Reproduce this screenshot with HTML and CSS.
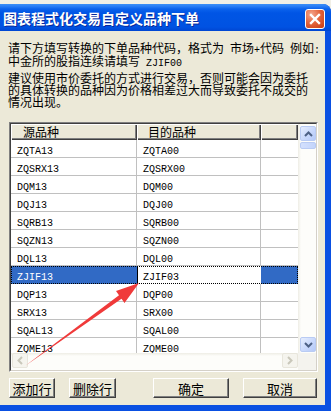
FILE: index.html
```html
<!DOCTYPE html>
<html lang="zh-CN">
<head>
  <meta charset="UTF-8" />
  <title>图表程式化交易自定义品种下单</title>
  <link rel="stylesheet" href="styles.css">
</head>
<body>
  <div class="desk"></div>

  <div class="window">
    <div class="titlebar">
      <span class="title">图表程式化交易自定义品种下单</span>
      <span class="close">
        <svg width="18" height="18" viewBox="0 0 18 18"><path d="M5 5 L13 13 M13 5 L5 13" stroke="#fff" stroke-width="2.4" stroke-linecap="square"/></svg>
      </span>
    </div>

    <div class="client">
      <p class="msg">请下方填写转换的下单品种代码，格式为<span class="hw"> </span>市场<span class="hw">+</span>代码<span class="hw"> </span>例如<span class="hw">:</span><br>中金所的股指连续请填写<span class="hw"> ZJIF00</span></p>
      <p class="msg second">建议使用市价委托的方式进行交易，否则可能会因为委托<br>的具体转换的品种因为价格相差过大而导致委托不成交的<br>情况出现。</p>

      <div class="grid">
        <div class="grid-in">
          <div class="list">
            <div class="row head"><div class="cell">源品种</div><div class="cell">目的品种</div><div class="cell"></div></div>
            <div class="row"><div class="cell">ZQTA13</div><div class="cell">ZQTA00</div><div class="cell"></div></div>
            <div class="row"><div class="cell">ZQSRX13</div><div class="cell">ZQSRX00</div><div class="cell"></div></div>
            <div class="row"><div class="cell">DQM13</div><div class="cell">DQM00</div><div class="cell"></div></div>
            <div class="row"><div class="cell">DQJ13</div><div class="cell">DQJ00</div><div class="cell"></div></div>
            <div class="row"><div class="cell">SQRB13</div><div class="cell">SQRB00</div><div class="cell"></div></div>
            <div class="row"><div class="cell">SQZN13</div><div class="cell">SQZN00</div><div class="cell"></div></div>
            <div class="row"><div class="cell">DQL13</div><div class="cell">DQL00</div><div class="cell"></div></div>
            <div class="row sel"><div class="cell">ZJIF13</div><div class="cell edit">ZJIF03</div><div class="cell"></div></div>
            <div class="row"><div class="cell">DQP13</div><div class="cell">DQP00</div><div class="cell"></div></div>
            <div class="row"><div class="cell">SRX13</div><div class="cell">SRX00</div><div class="cell"></div></div>
            <div class="row"><div class="cell">SQAL13</div><div class="cell">SQAL00</div><div class="cell"></div></div>
            <div class="row"><div class="cell">ZQME13</div><div class="cell">ZQME00</div><div class="cell"></div></div>
          </div>

          <div class="vscroll">
            <span class="sbtn"><svg width="9" height="6" viewBox="0 0 9 6"><path d="M1 5 L4.5 1.5 L8 5" fill="none" stroke="#4D6185" stroke-width="2"/></svg></span>
            <span class="thumb"></span>
            <span class="track"></span>
            <span class="sbtn"><svg width="9" height="6" viewBox="0 0 9 6"><path d="M1 1 L4.5 4.5 L8 1" fill="none" stroke="#4D6185" stroke-width="2"/></svg></span>
          </div>

          <div class="hscroll">
            <span class="sbtn off"><svg width="6" height="9" viewBox="0 0 6 9"><path d="M5 1 L1.5 4.5 L5 8" fill="none" stroke="#C9C7BA" stroke-width="2"/></svg></span>
            <span class="sbtn off"><svg width="6" height="9" viewBox="0 0 6 9"><path d="M1 1 L4.5 4.5 L1 8" fill="none" stroke="#C9C7BA" stroke-width="2"/></svg></span>
          </div>
          <div class="corner"></div>
        </div>
      </div>

      <div class="buttons">
        <button class="btn add">添加行</button>
        <button class="btn del">删除行</button>
        <button class="btn ok">确定</button>
        <button class="btn cancel">取消</button>
      </div>
    </div>
  </div>

  <svg class="arrow" width="331" height="411" viewBox="0 0 331 411">
    <polygon points="25,366 119,295.3 116,291 139,283 124.5,303 121.5,298.7" fill="#F03A3A"/>
  </svg>
</body>
</html>
```

FILE: styles.css
```css
body {
  margin: 0;
  width: 331px;
  height: 411px;
  overflow: hidden;
  position: relative;
  background: #F1EFE6;
  font-family: "Noto Sans CJK SC", sans-serif;
  font-size: 12px;
  color: #000;
}

.desk {
  height: 4px;
  background: #F1EFE6;
}

.window {
  height: 407px;
  display: flex;
  flex-direction: column;
  background: #0A50E2;
  border-top-right-radius: 8px;
}

.titlebar {
  height: 27px;
  flex: none;
  display: flex;
  align-items: flex-start;
  justify-content: space-between;
  padding: 0 6px 0 3px;
  border-top-right-radius: 8px;
  background: linear-gradient(to bottom, #3D8FF5 0, #2C80F6 2px, #0B62EC 5px, #0055E5 9px, #0054E3 60%, #0052E2 85%, #0046D2 100%);
}

.title {
  margin-top: 6px;
  color: #fff;
  font-weight: bold;
  font-size: 14px;
  line-height: 16px;
  text-shadow: 1px 1px #0A2A9C;
}

.close {
  margin-top: 5px;
  width: 20px;
  height: 20px;
  box-sizing: border-box;
  border: 1px solid #fff;
  border-radius: 3px;
  display: flex;
  align-items: center;
  justify-content: center;
  background: radial-gradient(circle at 30% 25%, #F4A88F 0, #E5663F 45%, #C7390F 100%);
}

.client {
  flex: 1;
  margin: 0 6px 6px 0;
  padding-top: 10px;
  background: #ECE9D8;
}

.msg {
  margin: 0;
  padding-left: 8px;
  line-height: 13px;
  white-space: nowrap;
}

.msg.second {
  margin-top: 5px;
  line-height: 12px;
}

.hw {
  font-family: "Liberation Mono", monospace;
  font-size: 10px;
  line-height: 6px;
  white-space: pre;
}

/* list view */
.grid {
  margin: 14px 0 0 9px;
  width: 309px;
  height: 250px;
  box-sizing: border-box;
  border: 1px solid;
  border-color: #808080 #fff #fff #808080;
}

.grid-in {
  height: 100%;
  box-sizing: border-box;
  border: 1px solid;
  border-color: #404040 #D4D0C8 #D4D0C8 #404040;
  display: grid;
  grid-template-columns: 287px 18px;
  grid-template-rows: 229px 17px;
  background: #fff;
}

.list {
  overflow: hidden;
  min-height: 0;
  background: #fff;
}

.row {
  display: grid;
  grid-template-columns: 126px 124px 37px;
  height: 18px;
}

.cell {
  box-sizing: border-box;
  border-right: 1px solid #C0C0C0;
  border-bottom: 1px solid #C0C0C0;
  padding: 6px 0 0 6px;
  font-family: "Liberation Mono", monospace;
  font-size: 10px;
  line-height: 11px;
  white-space: nowrap;
}

.cell:last-child {
  border-right: none;
}

.head {
  height: 16px;
}

.head .cell {
  border: none;
  padding: 0 0 0 12px;
  background: #ECE9D8;
  font-family: "Noto Sans CJK SC", sans-serif;
  font-size: 12px;
  line-height: 15px;
  box-shadow: inset 1px 1px #fff, inset -1px -1px #404040, inset -2px -2px #808080;
}

.head .cell:nth-child(2) {
  padding-left: 11px;
}

.sel {
  position: relative;
  outline: 1px dotted #000;
  outline-offset: -1px;
}

.sel .cell {
  background: #316AC5;
  color: #fff;
  border-color: #316AC5;
}

.sel .edit {
  background: #fff;
  color: #000;
  border-left: 1px solid #000;
  border-right-color: #fff;
  border-bottom-color: #fff;
  padding-left: 5px;
}

/* scrollbars */
.vscroll {
  display: flex;
  flex-direction: column;
  min-height: 0;
  padding: 2px 0 1px 2px;
  background: linear-gradient(to right, #EEEDE5, #FDFDFA 3px);
}

.track {
  flex: 1;
}

.sbtn {
  flex: none;
  width: 16px;
  height: 15px;
  box-sizing: border-box;
  border: 1px solid #B9CBF3;
  border-radius: 2px;
  display: flex;
  align-items: center;
  justify-content: center;
  background: linear-gradient(135deg, #E6EEFE 0, #CBDAFC 50%, #B5C9F8 100%);
}

.thumb {
  flex: none;
  margin-top: 1px;
  width: 16px;
  height: 7px;
  box-sizing: border-box;
  border: 1px solid #B9CBF3;
  border-radius: 2px;
  background: linear-gradient(to right, #D3E0FD, #C4D5FB);
}

.hscroll {
  display: flex;
  justify-content: space-between;
  padding: 0 0 2px 1px;
  background: linear-gradient(to bottom, #EEEDE5, #FDFDFA 3px);
}

.sbtn.off {
  border-color: #E8E6DC;
  background: #F5F4EE;
}

.corner {
  background: #F4F3EE;
}

/* buttons */
.buttons {
  display: flex;
  margin-top: 6px;
  padding-left: 9px;
}

.btn {
  height: 20px;
  padding: 0;
  box-sizing: border-box;
  background: #ECE9D8;
  border: 1px solid;
  border-color: #fff #404040 #404040 #fff;
  box-shadow: inset -1px -1px #808080;
  font-family: "Noto Sans CJK SC", sans-serif;
  font-size: 13px;
  line-height: 17px;
  color: #000;
}

.add { width: 46px; }
.del { width: 47px; margin-left: 14px; }
.ok { width: 76px; margin-left: 37px; }
.cancel { width: 74px; margin-left: 14px; }

.arrow {
  position: absolute;
  top: 0;
  left: 0;
  pointer-events: none;
}
```
